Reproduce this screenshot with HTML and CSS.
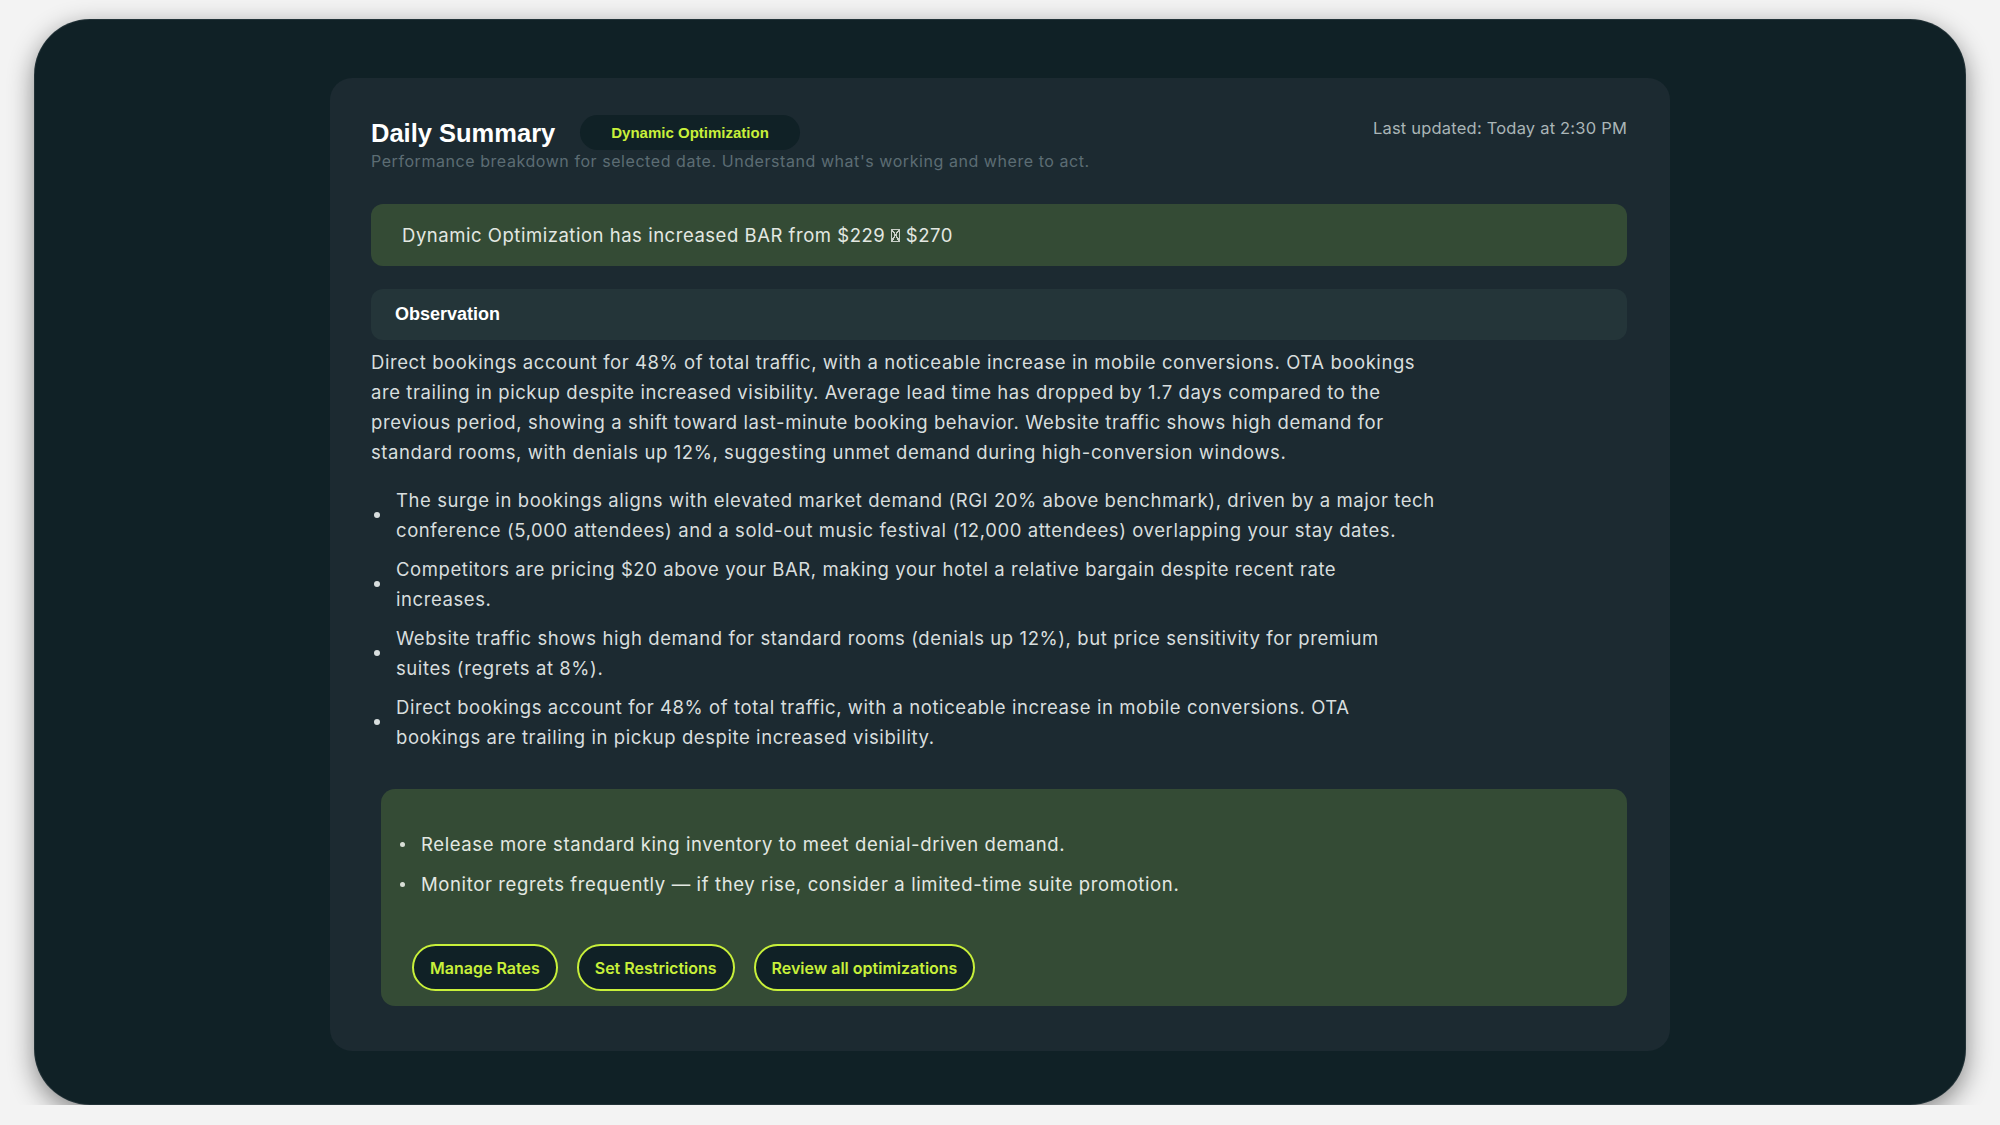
FILE: index.html
```html
<!DOCTYPE html>
<html>
<head>
    <link rel="stylesheet" href="styles.css">
</head>
<body>
    <div class="frame">
        <section class="card">
            <!-- Header -->
            <header class="card-head">
                <div class="head-text">
                    <div class="title-row">
                        <h1>Daily Summary</h1>
                        <span class="badge">Dynamic Optimization</span>
                    </div>
                    <p class="subtitle">Performance breakdown for selected date. Understand what's working and where to act.</p>
                </div>
                <span class="updated">Last updated: Today at 2:30 PM</span>
            </header>

            <!-- Highlight -->
            <div class="banner">Dynamic Optimization has increased BAR from $229 <span class="tofu"></span> $270</div>

            <!-- Observation -->
            <div class="obs-head">Observation</div>
            <div class="obs-body">
                <p>Direct bookings account for 48% of total traffic, with a noticeable increase in mobile conversions. OTA bookings are trailing in pickup despite increased visibility. Average lead time has dropped by 1.7 days compared to the previous period, showing a shift toward last-minute booking behavior. Website traffic shows high demand for standard rooms, with denials up 12%, suggesting unmet demand during high-conversion windows.</p>
                <ul class="points">
                    <li>The surge in bookings aligns with elevated market demand (RGI 20% above benchmark), driven by a major tech conference (5,000 attendees) and a sold-out music festival (12,000 attendees) overlapping your stay dates.</li>
                    <li>Competitors are pricing $20 above your BAR, making your hotel a relative bargain despite recent rate increases.</li>
                    <li>Website traffic shows high demand for standard rooms (denials up 12%), but price sensitivity for premium suites (regrets at 8%).</li>
                    <li>Direct bookings account for 48% of total traffic, with a noticeable increase in mobile conversions. OTA bookings are trailing in pickup despite increased visibility.</li>
                </ul>
            </div>

            <!-- Actions -->
            <div class="actions">
                <ul class="action-list">
                    <li>Release more standard king inventory to meet denial-driven demand.</li>
                    <li>Monitor regrets frequently — if they rise, consider a limited-time suite promotion.</li>
                </ul>
                <div class="buttons">
                    <button>Manage Rates</button>
                    <button>Set Restrictions</button>
                    <button>Review all optimizations</button>
                </div>
            </div>
        </section>
    </div>
</body>
</html>
```

FILE: styles.css
```css
body {
    margin: 0;
    background: #f3f3f3;
    font-family: 'Inter', 'Liberation Sans', sans-serif;
}
.frame {
    width: 1932px;
    height: 1086px;
    margin: 19px auto 0;
    box-sizing: border-box;
    background: #102126;
    border: 1px solid rgba(255, 255, 255, 0.08);
    border-radius: 56px;
    box-shadow: 0 8px 26px rgba(0, 0, 0, 0.45);
    display: flex;
    justify-content: center;
    padding-top: 58px;
}
.card {
    width: 1340px;
    align-self: flex-start;
    box-sizing: border-box;
    padding: 37px 43px 45px 41px;
    background: #1c2a31;
    border-radius: 22px;
    display: flex;
    flex-direction: column;
}
/* Header */
.card-head {
    display: flex;
    justify-content: space-between;
    align-items: flex-start;
}
.title-row {
    display: flex;
    align-items: center;
    gap: 25px;
    height: 35px;
}
h1 {
    margin: 0;
    font-family: 'Liberation Sans', sans-serif;
    font-size: 25.5px;
    line-height: 30px;
    font-weight: bold;
    color: #ffffff;
}
.badge {
    height: 35px;
    display: flex;
    align-items: center;
    padding: 0 31px;
    border-radius: 18px;
    background: #102126;
    color: #c8f03a;
    font-family: 'Liberation Sans', sans-serif;
    font-weight: bold;
    font-size: 15px;
}
.subtitle {
    margin: 0;
    font-size: 16px;
    line-height: 22px;
    letter-spacing: 0.56px;
    color: #5c6d74;
}
.updated {
    margin-top: 2px;
    font-size: 16.5px;
    line-height: 22px;
    letter-spacing: 0.2px;
    color: #aab5b7;
}
/* Highlight banner */
.banner {
    margin-top: 32px;
    height: 62px;
    display: flex;
    align-items: center;
    padding-left: 31px;
    border-radius: 12px;
    background: #344b35;
    color: #e3e8e2;
    font-size: 18.5px;
    letter-spacing: 0.53px;
    white-space: pre;
}
.tofu {
    display: inline-block;
    width: 7px;
    height: 11px;
    border: 1px solid #c9cfc8;
    background:
        linear-gradient(to top right, transparent 46%, #c9cfc8 46%, #c9cfc8 58%, transparent 58%),
        linear-gradient(to top left, transparent 46%, #c9cfc8 46%, #c9cfc8 58%, transparent 58%);
}
/* Observation */
.obs-head {
    margin-top: 23px;
    height: 51px;
    display: flex;
    align-items: center;
    padding-left: 24px;
    border-radius: 12px;
    background: #243539;
    color: #ffffff;
    font-family: 'Liberation Sans', sans-serif;
    font-weight: bold;
    font-size: 18px;
}
.obs-body {
    max-width: 1064px;
    margin-top: 7px;
    color: #d8dede;
    font-size: 18.5px;
    line-height: 30px;
    letter-spacing: 0.58px;
}
.obs-body p {
    margin: 0;
}
.points {
    list-style: none;
    margin: 18px 0 0;
    padding: 0;
    display: flex;
    flex-direction: column;
    gap: 9px;
}
.points li,
.action-list li {
    display: flex;
    align-items: center;
    gap: 16px;
}
.points li::before {
    content: '';
    flex: none;
    width: 6px;
    height: 6px;
    margin-left: 3px;
    border-radius: 50%;
    background: #d8dede;
}
/* Actions */
.actions {
    margin: 37px 0 0 10px;
    padding: 40px 0 15px 31px;
    border-radius: 14px;
    background: #344b35;
}
.action-list {
    list-style: none;
    margin: 0;
    padding: 0;
    display: flex;
    flex-direction: column;
    gap: 10px;
    color: #e3e8e2;
    font-size: 18.5px;
    line-height: 30px;
    letter-spacing: 0.62px;
}
.action-list li::before {
    content: '';
    flex: none;
    width: 5px;
    height: 5px;
    margin-left: -12px;
    border-radius: 50%;
    background: #d8ded6;
}
.buttons {
    display: flex;
    gap: 19px;
    margin-top: 45px;
}
button {
    height: 47px;
    padding: 0 16px;
    border: 2px solid #c8f03a;
    border-radius: 24px;
    background: #102126;
    color: #c8f03a;
    font-family: 'Inter', sans-serif;
    font-weight: 600;
    font-size: 16px;
    cursor: pointer;
}
```
